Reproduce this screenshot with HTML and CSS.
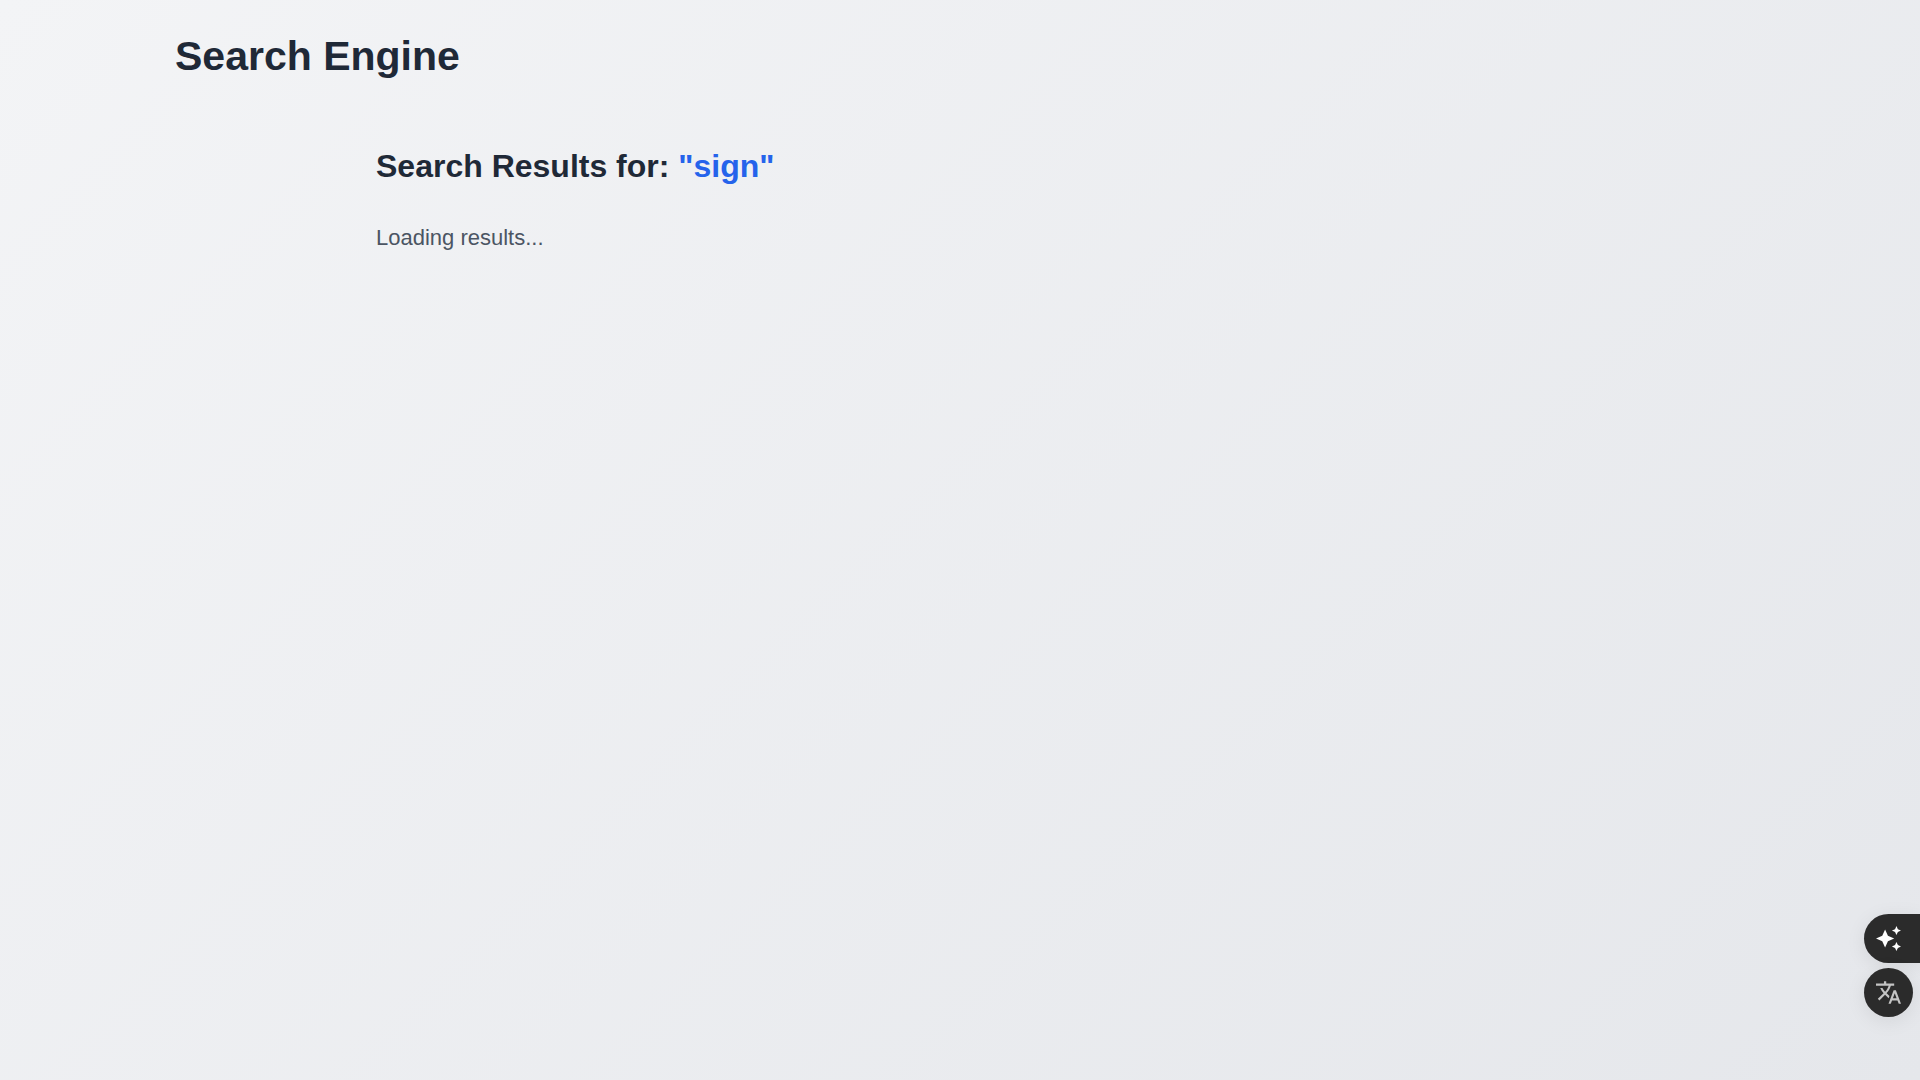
FILE: index.html
```html
<!DOCTYPE html>
<html lang="en">
<head>
<meta charset="utf-8">
<title>Search Engine</title>
<link rel="stylesheet" href="styles.css">
</head>
<body>
<header class="header"><h1 class="brand">Search Engine</h1></header>
<main class="results">
<h2 class="results-title">Search Results for: <span class="query">"sign"</span></h2>
<p class="status">Loading results...</p>
</main>
<div class="tools">
<button class="tool tool-tab" type="button" aria-label="Assistant">
<svg class="icon" viewBox="1 1 22 22" fill="currentColor"><path d="M19 9l-1.250-2.750L15 5l2.750-1.250L19 1l1.250 2.750L23 5l-2.750 1.250zM9 20l-2.500-5.500L1 12l5.500-2.500L9 4l2.500 5.500L17 12l-5.500 2.500zM19 23l-1.250-2.750L15 19l2.750-1.250L19 15l1.250 2.750L23 19l-2.750 1.250z"/></svg>
</button>
<button class="tool tool-round" type="button" aria-label="Translate">
<svg class="icon" viewBox="1 1 22 22" fill="currentColor"><path d="M12.870 15.070l-2.540-2.510.03-.03c1.740-1.940 2.980-4.170 3.710-6.530H17V4h-7V2H8v2H1v1.990h11.170C11.500 7.920 10.440 9.750 9 11.350 8.070 10.320 7.300 9.190 6.690 8h-2c.73 1.630 1.730 3.170 2.980 4.560l-5.090 5.020L4 19l5-5 3.110 3.110.76-2.040zM18.500 10h-2L12 22h2l1.120-3h4.750L21 22h2l-4.500-12zm-2.620 7l1.620-4.330L19.120 17h-3.240z"/></svg>
</button>
</div>
</body>
</html>
```
FILE: styles.css
```css
* { box-sizing: border-box; margin: 0; }
body {
  min-height: 100vh;
  padding: 24px;
  font-family: "Liberation Sans", Arial, sans-serif;
  color: #1f2937;
  background: linear-gradient(135deg, #f3f4f6, #e5e7eb);
}
.header { max-width: 1570px; margin: 0 auto; padding: 8px 0; }
.brand { font-size: 41px; line-height: 48px; }
.results { max-width: 1168px; margin: 0 auto; padding: 54px 0 0; }
.results-title { font-size: 32px; line-height: 48px; }
.query { color: #2563eb; }
.status { margin-top: 32px; font-size: 22px; line-height: 32px; color: #4b5563; }
.tools {
  position: fixed;
  right: 0;
  bottom: 63px;
  display: flex;
  flex-direction: column;
  gap: 5px;
}
.tool {
  display: flex;
  align-items: center;
  height: 49px;
  border: 0;
  padding: 0 12px;
  background: #2b2b2b;
  box-shadow: 0 4px 20px rgba(0, 0, 0, 0.08);
}
.tool-tab { width: 56px; border-radius: 25px 0 0 25px; color: #fff; }
.tool-round { width: 49px; border-radius: 50%; color: #c4c4c4; }
.icon { width: 25px; height: 25px; flex: none; }
```
